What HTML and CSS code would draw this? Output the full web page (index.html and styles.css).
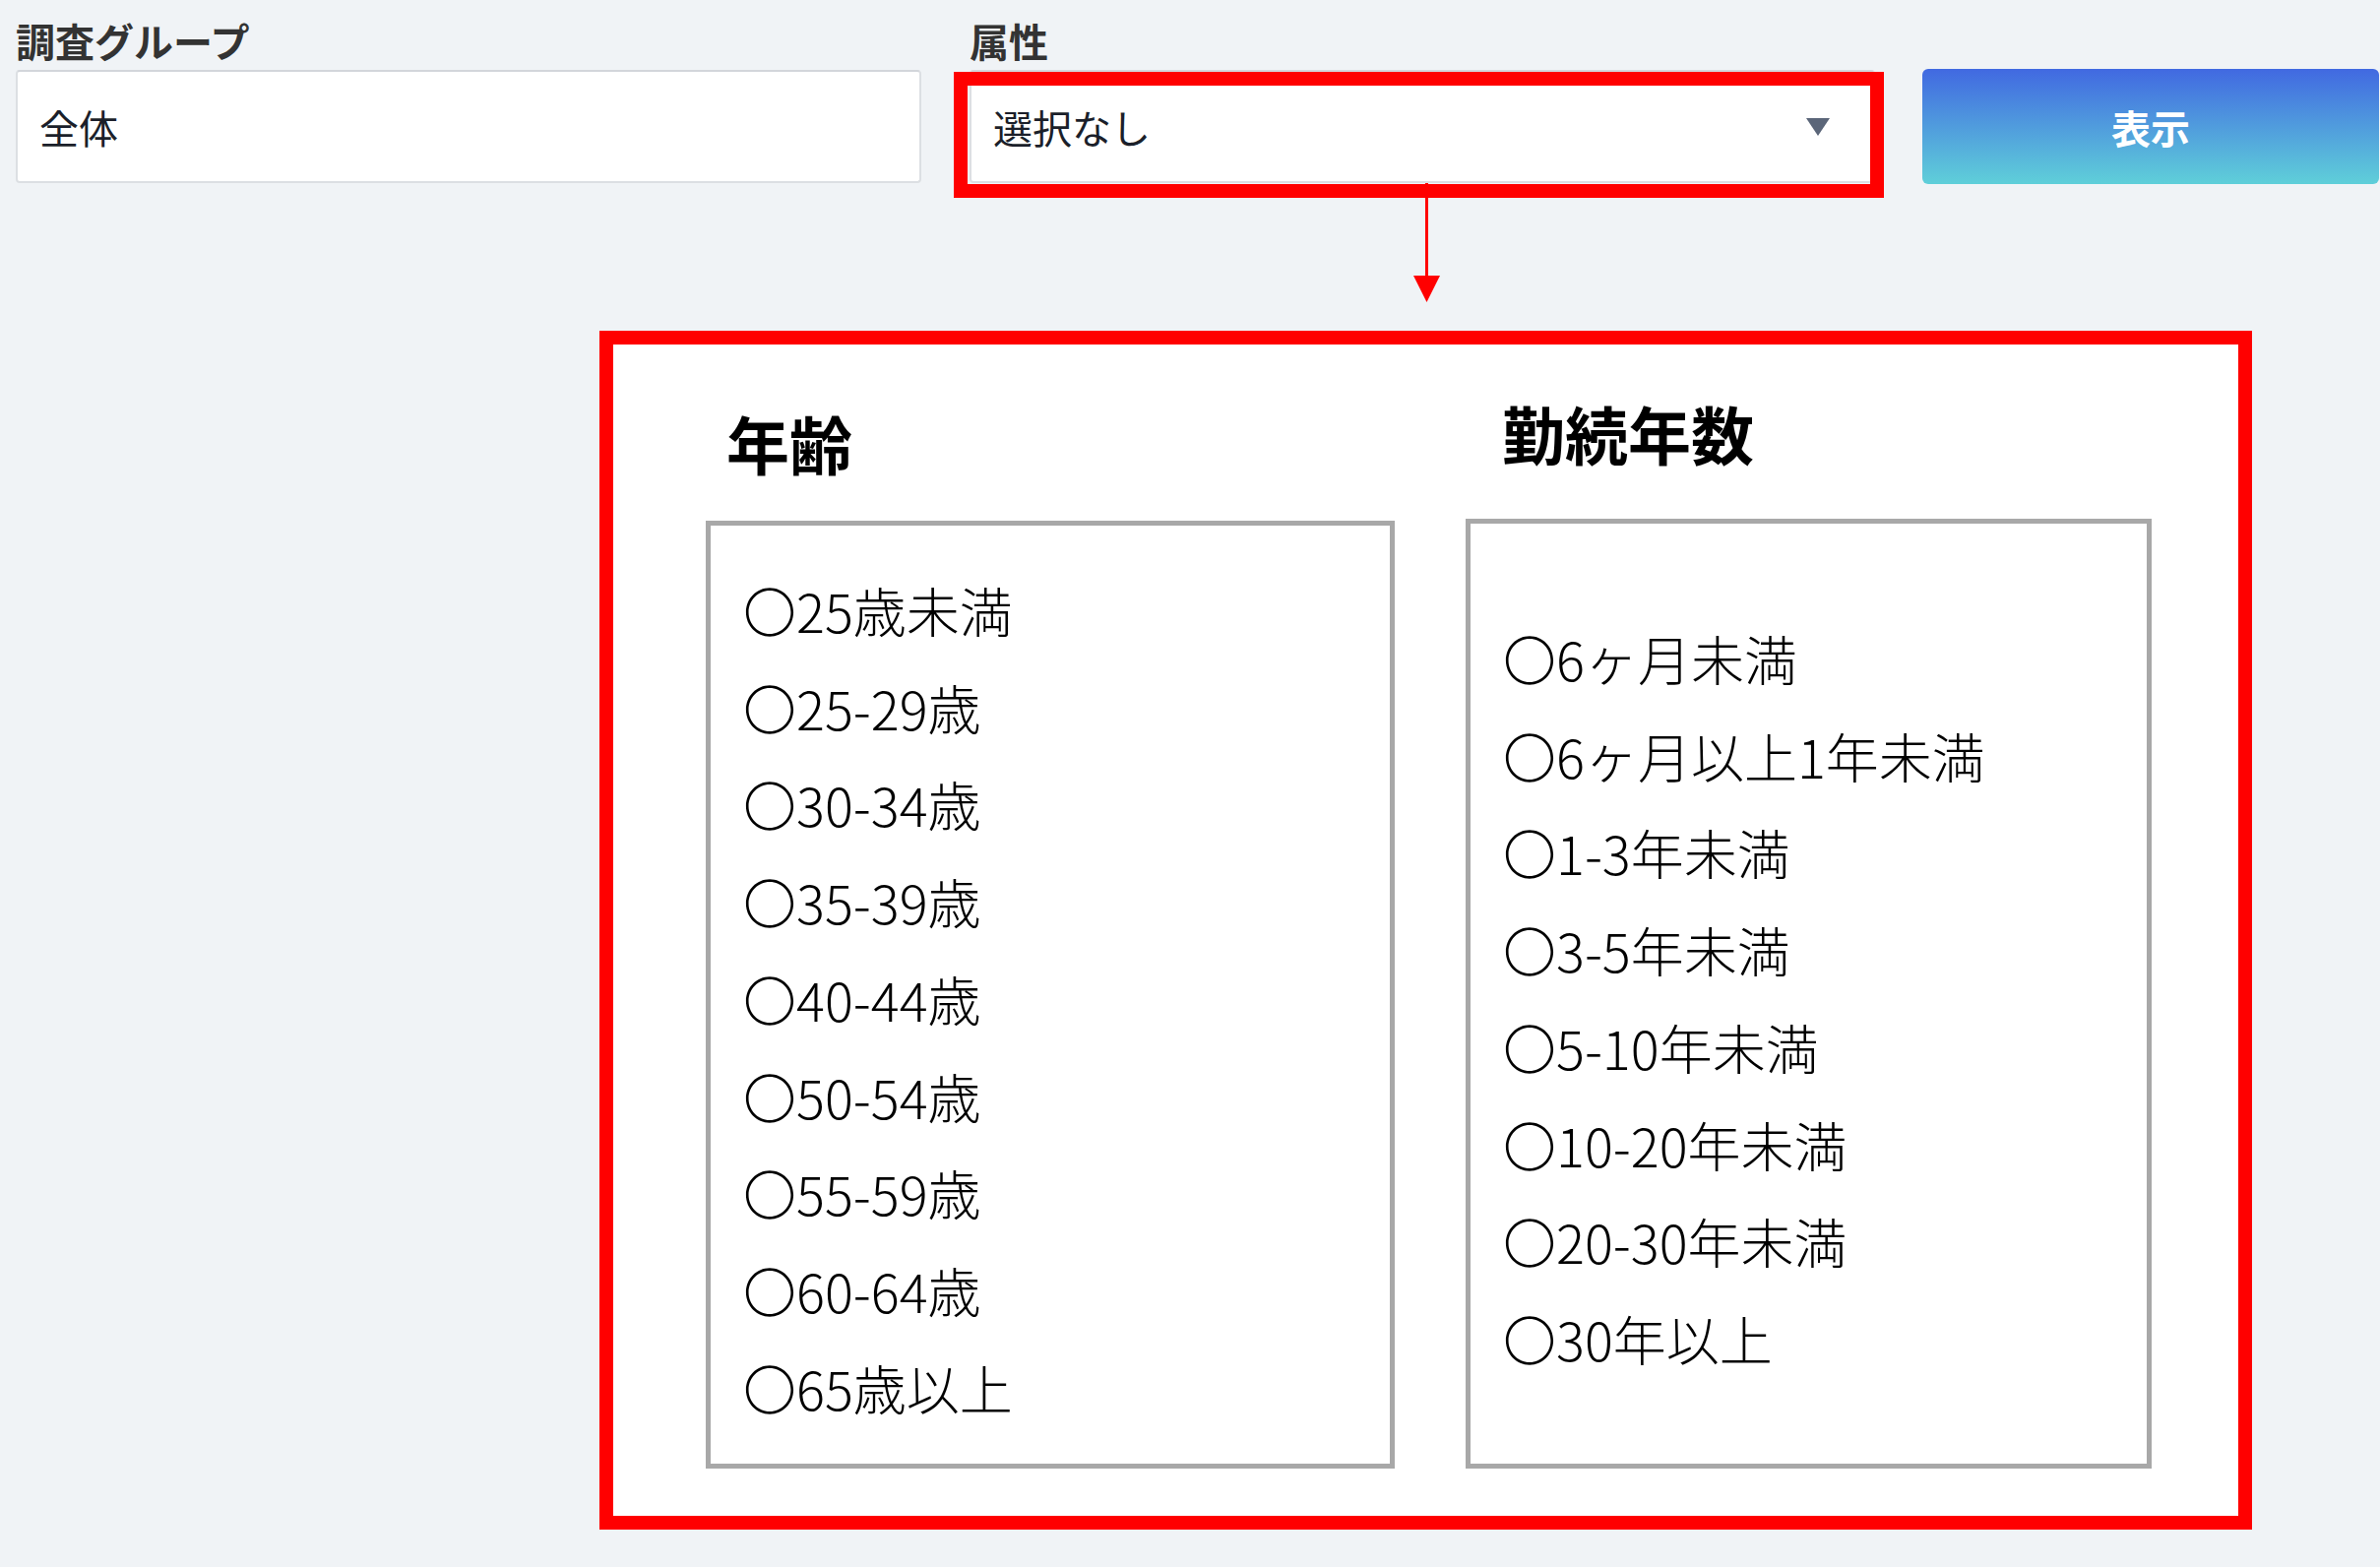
FILE: index.html
```html
<!DOCTYPE html>
<html lang="ja">
<head>
  <meta charset="UTF-8">
  <meta name="viewport" content="width=device-width, initial-scale=1.0">
  <title>属性選択</title>
  <link rel="stylesheet" href="styles.css">
</head>
<body>
  <div class="page">
    <div class="filters">
      <div class="field">
        <label class="field-label">調査グループ</label>
        <div class="input">全体</div>
      </div>
      <div class="field field-attr">
        <label class="field-label">属性</label>
        <div class="input select">
          <span>選択なし</span>
          <svg class="caret" width="24" height="18" viewBox="0 0 24 18"><polygon points="0,0 24,0 12,18" fill="#5b6679"/></svg>
          <div class="highlight"></div>
        </div>
      </div>
      <button class="show-btn" type="button">表示</button>
    </div>

    <div class="arrow">
      <svg width="27" height="121" viewBox="0 0 27 121">
        <line x1="13.5" y1="0" x2="13.5" y2="96" stroke="#ff0000" stroke-width="3"/>
        <polygon points="0,94 27,94 13.5,121" fill="#ff0000"/>
      </svg>
    </div>

    <div class="panel">
      <div class="column">
        <h2 class="column-title">年齢</h2>
        <ul class="option-box">
          <li>〇25歳未満</li>
          <li>〇25-29歳</li>
          <li>〇30-34歳</li>
          <li>〇35-39歳</li>
          <li>〇40-44歳</li>
          <li>〇50-54歳</li>
          <li>〇55-59歳</li>
          <li>〇60-64歳</li>
          <li>〇65歳以上</li>
        </ul>
      </div>
      <div class="column">
        <h2 class="column-title column-title-raised">勤続年数</h2>
        <ul class="option-box option-box-tenure">
          <li>〇6ヶ月未満</li>
          <li>〇6ヶ月以上1年未満</li>
          <li>〇1-3年未満</li>
          <li>〇3-5年未満</li>
          <li>〇5-10年未満</li>
          <li>〇10-20年未満</li>
          <li>〇20-30年未満</li>
          <li>〇30年以上</li>
        </ul>
      </div>
    </div>
  </div>
</body>
</html>
```

FILE: styles.css
```css
body {
  margin: 0;
  background: #f0f3f6;
  font-family: "Noto Sans CJK JP", "Noto Sans", sans-serif;
  color: #111;
}
.page {
  padding: 17px 0 40px 16px;
}
.filters {
  display: flex;
  align-items: flex-end;
}
.field {
  width: 920px;
}
.field-attr {
  margin-left: 49px;
}
.field-label {
  display: block;
  font-size: 40px;
  line-height: 48px;
  font-weight: bold;
  color: #333;
  margin-bottom: 6px;
}
.input {
  position: relative;
  box-sizing: border-box;
  height: 115px;
  display: flex;
  align-items: center;
  padding: 0 22px;
  background: #fff;
  border: 2px solid #dcdfe3;
  border-top-color: #d3d6db;
  border-radius: 4px;
  font-size: 40px;
  color: #1b1f2a;
}
.select {
  justify-content: space-between;
  padding-right: 44px;
}
.caret {
  display: block;
}
/* annotation frame drawn over the select */
.highlight {
  position: absolute;
  top: 0px;
  left: -18px;
  right: -11px;
  bottom: -17px;
  border: 14px solid #ff0000;
}
.show-btn {
  width: 464px;
  height: 117px;
  margin-left: 48px;
  margin-bottom: -1px;
  border: none;
  border-radius: 6px;
  background: linear-gradient(to bottom, #4169e1, #5fcfd9);
  color: #fff;
  font-family: inherit;
  font-size: 40px;
  font-weight: bold;
}
.arrow {
  margin-left: 1420px;
  height: 121px;
}
.arrow svg {
  display: block;
}
.panel {
  box-sizing: border-box;
  width: 1679px;
  margin: 29px 0 0 593px;
  padding: 67px 88px 48px 94px;
  background: #fff;
  border: 14px solid #ff0000;
  display: grid;
  grid-template-columns: 700px 697px;
  column-gap: 72px;
}
.column {
  display: flex;
  flex-direction: column;
}
.column-title {
  margin: 0 0 48px 21px;
  font-size: 64px;
  line-height: 64px;
  font-weight: bold;
  color: #000;
}
.column-title-raised {
  margin: -10px 0 56px 37px;
}
.option-box {
  flex: 1;
  margin: 0;
  padding: 37px 0 28px 33px;
  list-style: none;
  border: 5px solid #a8a8a8;
  font-size: 54px;
  line-height: 98.7px;
  font-weight: 300;
  color: #000;
}
.option-box-tenure {
  padding-top: 88px;
}
```
